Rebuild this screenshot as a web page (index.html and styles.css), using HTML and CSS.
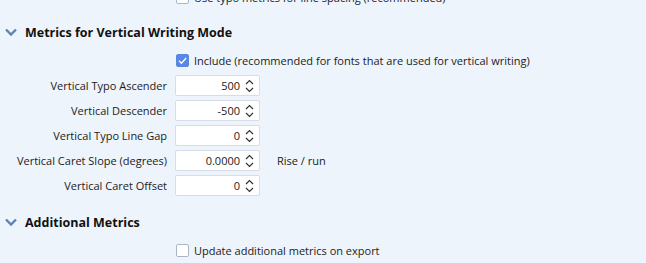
FILE: index.html
```html
<!DOCTYPE html>
<html lang="en">
<head>
    <meta charset="UTF-8">
    <title>Font Info - Metrics</title>
    <link rel="stylesheet" href="styles.css">
</head>
<body>
    <div class="panel">
        <label class="check-row cut">
            <span class="box"></span>
            <span>Use typo metrics for line spacing (recommended)</span>
        </label>

        <div class="section-head">
            <svg class="chevron" width="12" height="8" viewBox="0 0 12 8">
                <path d="M1 1.5 L6 6.5 L11 1.5" fill="none" stroke="#5b84b4" stroke-width="2.4"/>
            </svg>
            <span>Metrics for Vertical Writing Mode</span>
        </div>

        <label class="check-row include">
            <span class="box checked">
                <svg width="11" height="11" viewBox="0 0 11 11">
                    <path d="M2 5.8 L4.4 8.2 L9.2 3" fill="none" stroke="#fff" stroke-width="1.3"/>
                </svg>
            </span>
            <span>Include (recommended for fonts that are used for vertical writing)</span>
        </label>

        <div class="fields">
            <span class="label">Vertical Typo Ascender</span>
            <div class="spin"><span>500</span><svg class="arrows" width="9" height="14" viewBox="0 0 9 14"><path d="M1 5 L4.5 1.5 L8 5 M1 9 L4.5 12.5 L8 9" fill="none" stroke="#333" stroke-width="1.2"/></svg></div>
            <span></span>

            <span class="label">Vertical Descender</span>
            <div class="spin"><span>-500</span><svg class="arrows" width="9" height="14" viewBox="0 0 9 14"><path d="M1 5 L4.5 1.5 L8 5 M1 9 L4.5 12.5 L8 9" fill="none" stroke="#333" stroke-width="1.2"/></svg></div>
            <span></span>

            <span class="label">Vertical Typo Line Gap</span>
            <div class="spin"><span>0</span><svg class="arrows" width="9" height="14" viewBox="0 0 9 14"><path d="M1 5 L4.5 1.5 L8 5 M1 9 L4.5 12.5 L8 9" fill="none" stroke="#333" stroke-width="1.2"/></svg></div>
            <span></span>

            <span class="label">Vertical Caret Slope (degrees)</span>
            <div class="spin"><span>0.0000</span><svg class="arrows" width="9" height="14" viewBox="0 0 9 14"><path d="M1 5 L4.5 1.5 L8 5 M1 9 L4.5 12.5 L8 9" fill="none" stroke="#333" stroke-width="1.2"/></svg></div>
            <span class="note">Rise / run</span>

            <span class="label">Vertical Caret Offset</span>
            <div class="spin"><span>0</span><svg class="arrows" width="9" height="14" viewBox="0 0 9 14"><path d="M1 5 L4.5 1.5 L8 5 M1 9 L4.5 12.5 L8 9" fill="none" stroke="#333" stroke-width="1.2"/></svg></div>
            <span></span>
        </div>

        <div class="section-head second">
            <svg class="chevron" width="12" height="8" viewBox="0 0 12 8">
                <path d="M1 1.5 L6 6.5 L11 1.5" fill="none" stroke="#5b84b4" stroke-width="2.4"/>
            </svg>
            <span>Additional Metrics</span>
        </div>

        <label class="check-row update">
            <span class="box"></span>
            <span>Update additional metrics on export</span>
        </label>
    </div>
</body>
</html>
```

FILE: styles.css
```css
body {
    margin: 0;
    background-color: #eef4fc;
    font-family: "Open Sans", "Noto Sans", sans-serif;
    font-size: 11px;
    color: #1b1b1b;
    overflow: hidden;
}
.panel {
    width: 646px;
    padding-top: 1px;
}
.check-row {
    display: flex;
    align-items: center;
    gap: 5px;
    height: 20px;
    padding-left: 176px;
}
.check-row.cut {
    margin-top: -14px;
}
.check-row.include {
    margin-top: 6px;
}
.check-row.update {
    margin-top: 6px;
}
.box {
    box-sizing: border-box;
    width: 13px;
    height: 13px;
    border: 1px solid #a9b6c8;
    border-radius: 2px;
    background-color: #fff;
    display: flex;
    align-items: center;
    justify-content: center;
}
.box.checked {
    background-color: #5a86e6;
    border-color: #5a86e6;
}
.section-head {
    display: flex;
    align-items: center;
    gap: 8px;
    height: 24px;
    margin-top: 13px;
    padding-left: 5px;
    font-size: 12.5px;
    font-weight: bold;
    color: #111;
}
.section-head.second {
    margin-top: 14px;
}
.fields {
    display: grid;
    grid-template-columns: 167px 85px auto;
    grid-auto-rows: 21px;
    column-gap: 8px;
    row-gap: 4px;
    align-items: center;
    margin-top: 5px;
}
.label {
    text-align: right;
}
.spin {
    box-sizing: border-box;
    height: 21px;
    display: flex;
    align-items: center;
    justify-content: flex-end;
    gap: 5px;
    padding-right: 5px;
    background-color: #fff;
    border: 1px solid #d6dde7;
    border-radius: 2px;
}
.note {
    padding-left: 9px;
}
```
